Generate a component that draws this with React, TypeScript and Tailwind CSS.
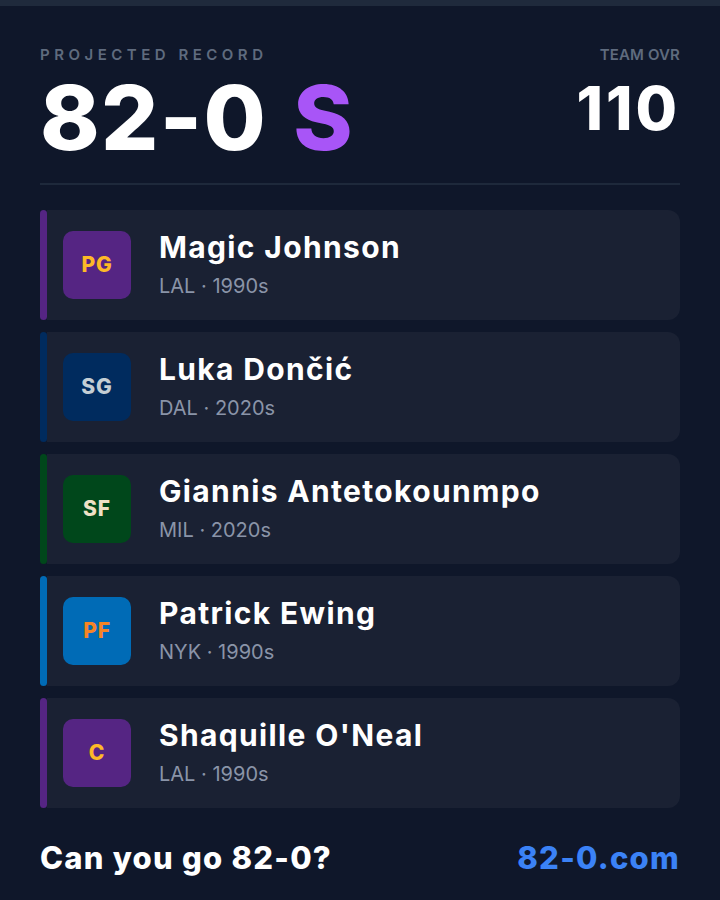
const players = [
  { pos: "PG", name: "Magic Johnson", team: "LAL", era: "1990s", bg: "bg-[#552583]", fg: "text-[#fdb927]" },
  { pos: "SG", name: "Luka Dončić", team: "DAL", era: "2020s", bg: "bg-[#002b5e]", fg: "text-[#c4ced4]" },
  { pos: "SF", name: "Giannis Antetokounmpo", team: "MIL", era: "2020s", bg: "bg-[#00471b]", fg: "text-[#eee1c6]" },
  { pos: "PF", name: "Patrick Ewing", team: "NYK", era: "1990s", bg: "bg-[#006bb6]", fg: "text-[#f58426]" },
  { pos: "C", name: "Shaquille O'Neal", team: "LAL", era: "1990s", bg: "bg-[#552583]", fg: "text-[#fdb927]" },
];

function PlayerRow({ p }: { p: (typeof players)[number] }) {
  return (
    <div className="flex h-[110px]">
      <div className={`w-[7px] rounded-full ${p.bg}`} />
      <div className="flex-1 flex items-center gap-7 pl-4 rounded-r-xl bg-[#1a2133]">
        <div className={`w-[68px] h-[68px] rounded-[10px] flex items-center justify-center ${p.bg}`}>
          <span className={`text-[21px] font-extrabold tracking-[0.04em] ${p.fg}`}>{p.pos}</span>
        </div>
        <div className="flex flex-col">
          <span className="text-[30px] leading-[32px] font-bold text-white tracking-[0.045em]">{p.name}</span>
          <span className="text-[20px] leading-[24px] text-[#8a94a8] mt-[11px]">
            {p.team} · {p.era}
          </span>
        </div>
      </div>
    </div>
  );
}

export default function App() {
  return (
    <div className="w-[720px] h-[900px] bg-[#0f172a] font-['Inter',sans-serif] overflow-hidden">
      <div className="h-[6px] bg-[#1f2a3c]" />
      <div className="px-10">
        <div className="flex justify-between items-start pt-[39px]">
          <div>
            <div className="text-[15px] leading-[20px] font-semibold tracking-[0.3em] text-[#5f6b7e]">
              PROJECTED RECORD
            </div>
            <div className="mt-[-1px] text-[90px] leading-[1.21] font-extrabold text-white tracking-[0.015em] flex">
              <span>82-0</span>
              <span className="ml-[26px] text-[#a855f7]">S</span>
            </div>
          </div>
          <div className="flex flex-col items-end">
            <div className="text-[15px] leading-[20px] font-semibold text-[#5f6b7e] tracking-[0.01em]">TEAM OVR</div>
            <div className="mt-[13px] text-[60px] leading-none font-extrabold text-white tracking-[0.05em]">110</div>
          </div>
        </div>
        <div className="mt-[10px] h-[2px] bg-[#1e293b]" />
        <div className="mt-[25px] flex flex-col gap-3">
          {players.map((p) => (
            <PlayerRow key={p.pos} p={p} />
          ))}
        </div>
        <div className="mt-[27px] flex justify-between items-center">
          <span className="text-[31px] font-extrabold text-white tracking-[0.04em]">Can you go 82-0?</span>
          <span className="text-[31px] font-extrabold text-[#3b82f6] tracking-[0.04em]">82-0.com</span>
        </div>
      </div>
    </div>
  );
}
